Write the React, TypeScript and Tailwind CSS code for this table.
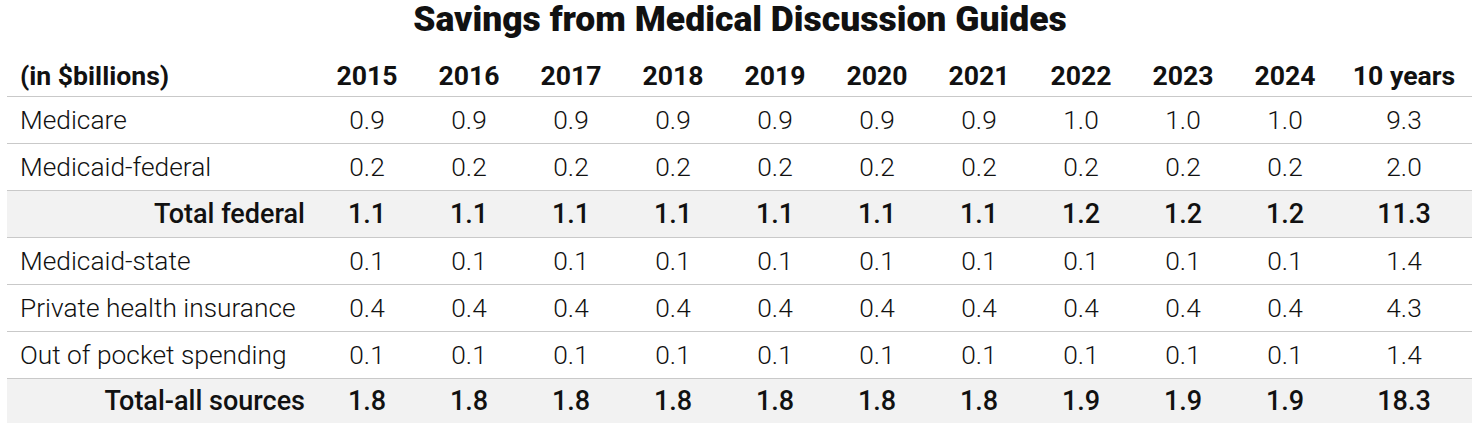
import React from 'react'

type Row = {
    label: string
    values: string[]
    total?: boolean
}

const years = ['2015', '2016', '2017', '2018', '2019', '2020', '2021', '2022', '2023', '2024']

const rows: Row[] = [
    { label: 'Medicare', values: ['0.9', '0.9', '0.9', '0.9', '0.9', '0.9', '0.9', '1.0', '1.0', '1.0', '9.3'] },
    { label: 'Medicaid-federal', values: ['0.2', '0.2', '0.2', '0.2', '0.2', '0.2', '0.2', '0.2', '0.2', '0.2', '2.0'] },
    { label: 'Total federal', total: true, values: ['1.1', '1.1', '1.1', '1.1', '1.1', '1.1', '1.1', '1.2', '1.2', '1.2', '11.3'] },
    { label: 'Medicaid-state', values: ['0.1', '0.1', '0.1', '0.1', '0.1', '0.1', '0.1', '0.1', '0.1', '0.1', '1.4'] },
    { label: 'Private health insurance', values: ['0.4', '0.4', '0.4', '0.4', '0.4', '0.4', '0.4', '0.4', '0.4', '0.4', '4.3'] },
    { label: 'Out of pocket spending', values: ['0.1', '0.1', '0.1', '0.1', '0.1', '0.1', '0.1', '0.1', '0.1', '0.1', '1.4'] },
    { label: 'Total-all sources', total: true, values: ['1.8', '1.8', '1.8', '1.8', '1.8', '1.8', '1.8', '1.9', '1.9', '1.9', '18.3'] },
]

export default function App() {
    return (
        <div className="w-[1480px] h-[434px] bg-white text-[#111] font-['Roboto',sans-serif] overflow-hidden">
            <div className="h-[40px] pt-[2px]">
                <h1 className="text-center text-[35.5px] leading-[34px] font-black">
                    Savings from Medical Discussion Guides
                </h1>
            </div>
            <table className="ml-[7px] w-[1465px] table-fixed border-collapse text-[26.3px] leading-[30px]">
                <colgroup>
                    <col className="w-[309px]" />
                    {years.map((y) => (
                        <col key={y} className="w-[102px]" />
                    ))}
                    <col className="w-[136px]" />
                </colgroup>
                <thead>
                    <tr className="h-[56px] border-b border-[#c9c9c9] text-[26.6px]">
                        <th className="pl-[13px] pt-[16px] text-left font-bold">(in $billions)</th>
                        {years.map((y) => (
                            <th key={y} className="pt-[16px] text-center font-bold">
                                {y}
                            </th>
                        ))}
                        <th className="pt-[16px] text-center font-bold">10 years</th>
                    </tr>
                </thead>
                <tbody>
                    {rows.map((row, i) => (
                        <tr
                            key={row.label}
                            className={
                                (row.total ? 'bg-[#f2f2f2] font-medium text-[27px] ' : 'font-light ') +
                                (i === rows.length - 1 ? 'h-[45px]' : 'h-[47px] border-b border-[#c9c9c9]')
                            }
                        >
                            <td className={row.total ? 'pr-[11px] text-right' : 'pl-[13px] text-left'}>{row.label}</td>
                            {row.values.map((v, j) => (
                                <td key={j} className="text-center">
                                    {v}
                                </td>
                            ))}
                        </tr>
                    ))}
                </tbody>
            </table>
        </div>
    )
}
